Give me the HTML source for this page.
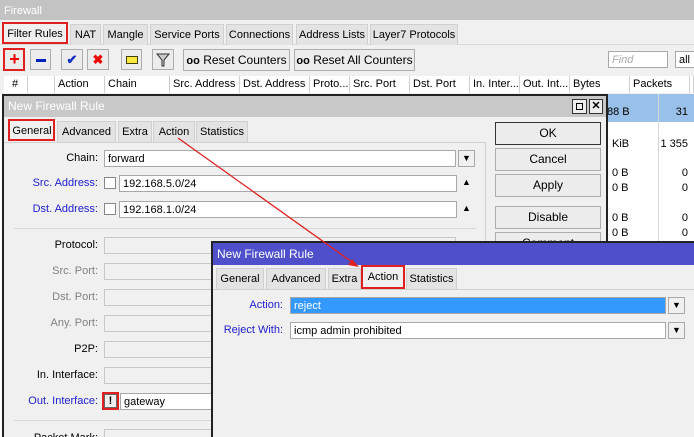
<!DOCTYPE html>
<html style="overflow:hidden;width:694px;height:437px"><head><meta charset="utf-8"><style>
*{box-sizing:border-box;margin:0;padding:0}
body{width:694px;height:437px;overflow:hidden;background:#f0f0f0;font:11px "Liberation Sans",sans-serif;color:#000;position:relative}
.a{position:absolute}
.tab{position:absolute;background:#e3e3e3;border:1px solid #d0d0d0;border-bottom:none;text-align:center;line-height:20px;white-space:nowrap}
.btn{position:absolute;background:#ececec;border:1px solid #adadad;text-align:center;line-height:20px;white-space:nowrap}
.in{position:absolute;background:#fff;border:1px solid #a8a8a8;padding-left:3px;line-height:16px;height:17px}
.dis{position:absolute;background:#f0f0f0;border:1px solid #c8c8c8;height:17px}
.lb{position:absolute;text-align:right;width:95px;line-height:17px}
.blue{color:#2020d0}
.gray{color:#808080}
.col{position:absolute;top:76px;height:17px;border-right:1px solid #d0d0d0;padding-left:3px;line-height:17px;background:#fff;white-space:nowrap;overflow:hidden}
.dd{position:absolute;width:17px;height:17px;border:1px solid #a8a8a8;background:#f0f0f0;text-align:center;font-size:9px;line-height:15px}
.red{position:absolute;border:2px solid #e02020}
</style></head><body>
<div class="a" style="left:0;top:0;width:694px;height:20px;background:#c3c3c3;color:#fff;padding-left:4px;line-height:22px">Firewall</div>
<div class="a" style="left:0;top:44px;width:694px;height:1px;background:#d8d8d8"></div>
<div class="tab" style="left:3px;top:23px;width:64px;background:#f0f0f0">Filter Rules</div>
<div class="red" style="left:2px;top:22px;width:66px;height:22px"></div>
<div class="tab" style="left:70px;top:24px;width:31px">NAT</div>
<div class="tab" style="left:103px;top:24px;width:45px">Mangle</div>
<div class="tab" style="left:150px;top:24px;width:74px">Service Ports</div>
<div class="tab" style="left:226px;top:24px;width:67px">Connections</div>
<div class="tab" style="left:296px;top:24px;width:72px">Address Lists</div>
<div class="tab" style="left:370px;top:24px;width:88px">Layer7 Protocols</div>

<div class="btn" style="left:4px;top:49px;width:21px;height:21px;color:#e00;font-weight:bold;font-size:18px;line-height:18px">+</div>
<div class="red" style="left:3px;top:48px;width:22px;height:23px"></div>
<div class="btn" style="left:30px;top:49px;width:21px;height:21px"><div class="a" style="left:5px;top:9px;width:10px;height:3px;background:#0020c0"></div></div>
<div class="btn" style="left:61px;top:49px;width:22px;height:21px;color:#1030c0;font-weight:bold;font-size:13px">✔</div>
<div class="btn" style="left:87px;top:49px;width:22px;height:21px;color:#e00;font-weight:bold;font-size:13px">✖</div>
<div class="btn" style="left:121px;top:49px;width:21px;height:21px"><div class="a" style="left:4px;top:6px;width:12px;height:8px;background:#f8e840;border:1px solid #404000"></div></div>
<div class="btn" style="left:152px;top:49px;width:22px;height:21px"><svg width="14" height="14" style="margin-top:3px"><path d="M1 1h12l-5 6v6h-2v-6z" fill="#ccc" stroke="#333"/></svg></div>
<div class="btn" style="left:183px;top:49px;width:107px;height:22px;font-size:12px"><b style="font-size:11px">oo</b> Reset Counters</div>
<div class="btn" style="left:294px;top:49px;width:121px;height:22px;font-size:12px"><b style="font-size:11px">oo</b> Reset All Counters</div>
<div class="in" style="left:608px;top:51px;width:60px;color:#aaa;font-style:italic">Find</div>
<div class="in" style="left:675px;top:51px;width:25px">all</div>

<div class="col" style="left:4px;width:24px;padding-left:8px">#</div>
<div class="col" style="left:28px;width:27px"></div>
<div class="col" style="left:55px;width:50px">Action</div>
<div class="col" style="left:105px;width:65px">Chain</div>
<div class="col" style="left:170px;width:70px">Src. Address</div>
<div class="col" style="left:240px;width:70px">Dst. Address</div>
<div class="col" style="left:310px;width:40px">Proto...</div>
<div class="col" style="left:350px;width:60px">Src. Port</div>
<div class="col" style="left:410px;width:60px">Dst. Port</div>
<div class="col" style="left:470px;width:50px">In. Inter...</div>
<div class="col" style="left:520px;width:50px">Out. Int...</div>
<div class="col" style="left:570px;width:60px">Bytes</div>
<div class="col" style="left:630px;width:60px">Packets</div>
<div class="col" style="left:690px;width:4px"></div>
<div class="a" style="left:0;top:94px;width:694px;height:343px;background:#fff"></div>
<div class="a" style="left:607px;top:94px;width:87px;height:28px;background:#99c0e8"></div>
<div class="a" style="left:607px;top:104px;width:55px;line-height:16px">88 B</div><div class="a" style="left:660px;top:104px;width:28px;text-align:right;line-height:16px">31</div>
<div class="a" style="left:612px;top:136px;line-height:16px">KiB</div><div class="a" style="left:650px;top:136px;width:38px;text-align:right;line-height:16px">1 355</div>
<div class="a" style="left:612px;top:167px">0 B</div><div class="a" style="left:670px;top:167px;width:18px;text-align:right">0</div>
<div class="a" style="left:612px;top:182px">0 B</div><div class="a" style="left:670px;top:182px;width:18px;text-align:right">0</div>
<div class="a" style="left:612px;top:212px">0 B</div><div class="a" style="left:670px;top:212px;width:18px;text-align:right">0</div>
<div class="a" style="left:612px;top:227px">0 B</div><div class="a" style="left:670px;top:227px;width:18px;text-align:right">0</div>
<div class="a" style="left:658px;top:94px;width:1px;height:150px;background:#d8d8d8"></div>

<!-- dialog 1 -->
<div class="a" style="left:2px;top:94px;width:606px;height:343px;background:#f0f0f0;border:2px solid #222;border-bottom:none"></div>
<div class="a" style="left:4px;top:96px;width:602px;height:21px;background:#c8c8c8;color:#fff;padding-left:4px;line-height:20px;font-size:12px">New Firewall Rule</div>
<div class="a" style="left:572px;top:99px;width:15px;height:15px;border:1px solid #333;background:#eee"><div class="a" style="left:3px;top:3px;width:7px;height:7px;border:1px solid #000"></div></div>
<div class="a" style="left:589px;top:99px;width:14px;height:15px;border:1px solid #333;background:#eee;font-size:11px;line-height:13px;text-align:center;font-weight:bold">✕</div>
<div class="tab" style="left:9px;top:120px;width:46px;background:#f0f0f0">General</div>
<div class="red" style="left:8px;top:119px;width:47px;height:22px"></div>
<div class="tab" style="left:57px;top:121px;width:59px">Advanced</div>
<div class="tab" style="left:118px;top:121px;width:34px">Extra</div>
<div class="tab" style="left:153px;top:121px;width:42px">Action</div>
<div class="tab" style="left:196px;top:121px;width:52px">Statistics</div>
<div class="a" style="left:4px;top:142px;width:482px;height:1px;background:#d0d0d0"></div>
<div class="a" style="left:485px;top:142px;width:1px;height:300px;background:#d0d0d0"></div>
<div class="btn" style="left:495px;top:122px;width:106px;height:23px;border:1px solid #333;font-size:12px">OK</div>
<div class="btn" style="left:495px;top:148px;width:106px;height:23px;font-size:12px">Cancel</div>
<div class="btn" style="left:495px;top:174px;width:106px;height:23px;font-size:12px">Apply</div>
<div class="btn" style="left:495px;top:206px;width:106px;height:23px;font-size:12px">Disable</div>
<div class="btn" style="left:495px;top:232px;width:106px;height:23px;font-size:12px">Comment</div>

<div class="lb" style="left:3px;top:150px">Chain:</div>
<div class="in" style="left:104px;top:150px;width:352px">forward</div>
<div class="dd" style="left:458px;top:150px">▼</div>
<div class="lb blue" style="left:3px;top:175px">Src. Address:</div>
<div class="a" style="left:104px;top:177px;width:12px;height:12px;border:1px solid #888;background:#fff"></div>
<div class="in" style="left:119px;top:175px;width:338px">192.168.5.0/24</div>
<div class="a" style="left:462px;top:177px;font-size:9px">▲</div>
<div class="lb blue" style="left:3px;top:201px">Dst. Address:</div>
<div class="a" style="left:104px;top:203px;width:12px;height:12px;border:1px solid #888;background:#fff"></div>
<div class="in" style="left:119px;top:201px;width:338px">192.168.1.0/24</div>
<div class="a" style="left:462px;top:203px;font-size:9px">▲</div>
<div class="a" style="left:14px;top:228px;width:462px;height:1px;background:#d8d8d8"></div>
<div class="lb" style="left:3px;top:237px">Protocol:</div><div class="dis" style="left:104px;top:237px;width:352px"></div>
<div class="lb gray" style="left:3px;top:263px">Src. Port:</div><div class="dis" style="left:104px;top:263px;width:352px"></div>
<div class="lb gray" style="left:3px;top:289px">Dst. Port:</div><div class="dis" style="left:104px;top:289px;width:352px"></div>
<div class="lb gray" style="left:3px;top:315px">Any. Port:</div><div class="dis" style="left:104px;top:315px;width:352px"></div>
<div class="lb" style="left:3px;top:341px">P2P:</div><div class="dis" style="left:104px;top:341px;width:352px"></div>
<div class="lb" style="left:3px;top:367px">In. Interface:</div><div class="dis" style="left:104px;top:367px;width:352px"></div>
<div class="lb blue" style="left:3px;top:393px">Out. Interface:</div>
<div class="a" style="left:104px;top:394px;width:13px;height:14px;border:1px solid #666;background:#eee;font-weight:bold;text-align:center;line-height:13px">!</div>
<div class="red" style="left:102px;top:392px;width:17px;height:18px"></div>
<div class="in" style="left:120px;top:393px;width:336px">gateway</div>
<div class="a" style="left:14px;top:420px;width:462px;height:1px;background:#d8d8d8"></div>
<div class="lb" style="left:3px;top:430px">Packet Mark:</div><div class="dis" style="left:104px;top:429px;width:352px;height:8px;border-bottom:none"></div>

<!-- dialog 2 -->
<div class="a" style="left:211px;top:241px;width:483px;height:196px;background:#f0f0f0;border:2px solid #222;border-right:none;border-bottom:none"></div>
<div class="a" style="left:213px;top:243px;width:481px;height:22px;background:#4f4fcc;color:#fff;padding-left:4px;line-height:22px;font-size:12px">New Firewall Rule</div>
<div class="tab" style="left:216px;top:268px;width:48px">General</div>
<div class="tab" style="left:266px;top:268px;width:60px">Advanced</div>
<div class="tab" style="left:328px;top:268px;width:33px">Extra</div>
<div class="tab" style="left:362px;top:266px;width:42px;background:#f0f0f0">Action</div>
<div class="red" style="left:361px;top:265px;width:44px;height:24px"></div>
<div class="tab" style="left:406px;top:268px;width:51px">Statistics</div>
<div class="a" style="left:213px;top:289px;width:481px;height:1px;background:#d0d0d0"></div>
<div class="a blue" style="left:190px;top:297px;width:93px;text-align:right;line-height:17px">Action:</div>
<div class="in" style="left:290px;top:297px;width:376px;background:#3399ff;color:#fff">reject</div>
<div class="dd" style="left:668px;top:297px">▼</div>
<div class="a blue" style="left:190px;top:322px;width:93px;text-align:right;line-height:17px">Reject With:</div>
<div class="in" style="left:290px;top:322px;width:376px">icmp admin prohibited</div>
<div class="dd" style="left:668px;top:322px">▼</div>

<svg class="a" style="left:0;top:0" width="694" height="437"><line x1="178" y1="138" x2="352" y2="262" stroke="#e02020" stroke-width="1.3"/><path d="M359 267l-11-2 4-6z" fill="#e02020"/></svg>
</body></html>
